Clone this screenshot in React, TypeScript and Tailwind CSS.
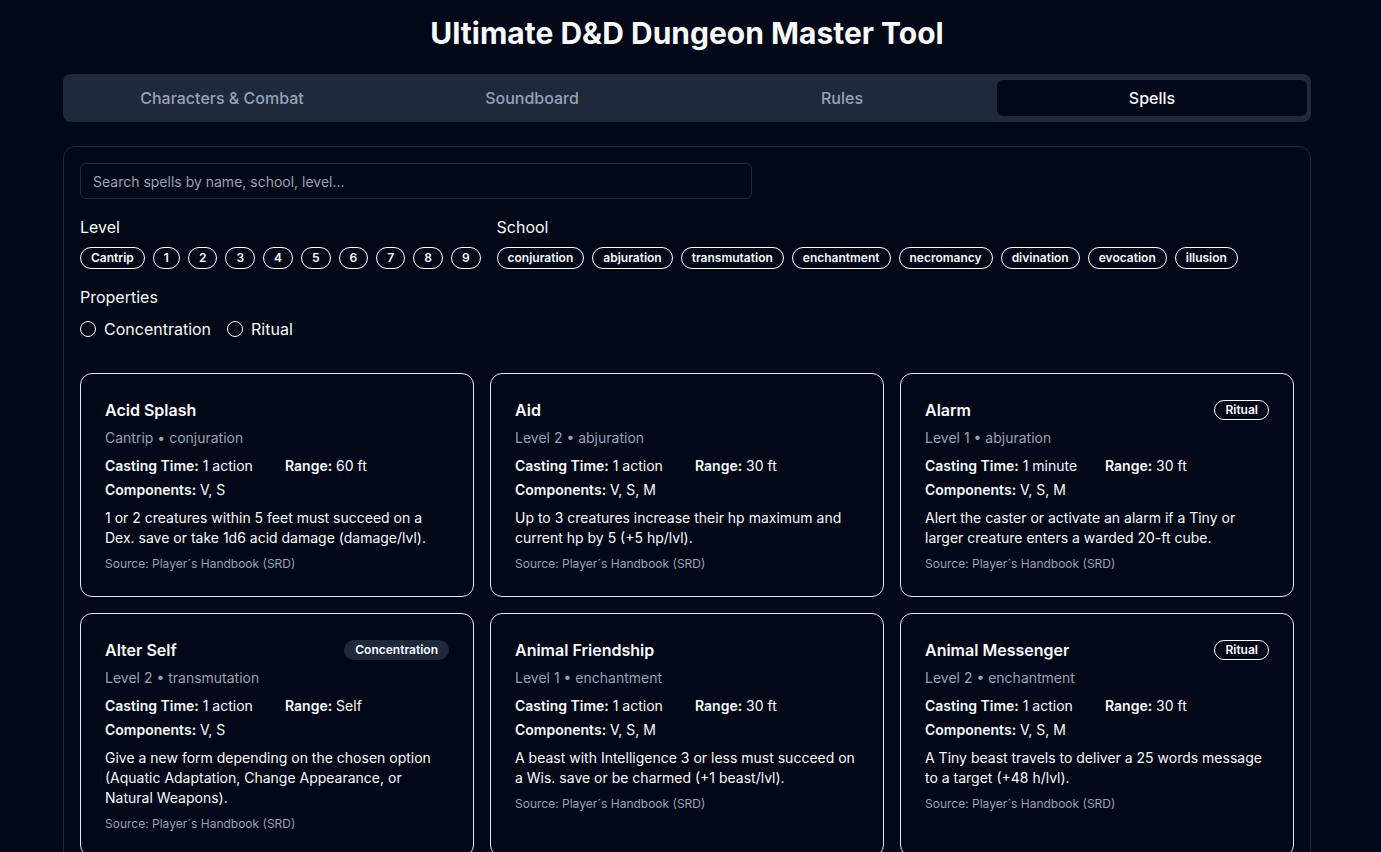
import { useState } from 'react';

interface Spell {
  name: string;
  level: string;
  school: string;
  castingTime: string;
  range: string;
  components: string;
  desc: string;
  ritual?: boolean;
  concentration?: boolean;
}

const spells: Spell[] = [
  { name: 'Acid Splash', level: 'Cantrip', school: 'conjuration', castingTime: '1 action', range: '60 ft', components: 'V, S', desc: '1 or 2 creatures within 5 feet must succeed on a Dex. save or take 1d6 acid damage (damage/lvl).' },
  { name: 'Aid', level: 'Level 2', school: 'abjuration', castingTime: '1 action', range: '30 ft', components: 'V, S, M', desc: 'Up to 3 creatures increase their hp maximum and current hp by 5 (+5 hp/lvl).' },
  { name: 'Alarm', level: 'Level 1', school: 'abjuration', castingTime: '1 minute', range: '30 ft', components: 'V, S, M', desc: 'Alert the caster or activate an alarm if a Tiny or larger creature enters a warded 20-ft cube.', ritual: true },
  { name: 'Alter Self', level: 'Level 2', school: 'transmutation', castingTime: '1 action', range: 'Self', components: 'V, S', desc: 'Give a new form depending on the chosen option (Aquatic Adaptation, Change Appearance, or Natural Weapons).', concentration: true },
  { name: 'Animal Friendship', level: 'Level 1', school: 'enchantment', castingTime: '1 action', range: '30 ft', components: 'V, S, M', desc: 'A beast with Intelligence 3 or less must succeed on a Wis. save or be charmed (+1 beast/lvl).' },
  { name: 'Animal Messenger', level: 'Level 2', school: 'enchantment', castingTime: '1 action', range: '30 ft', components: 'V, S, M', desc: 'A Tiny beast travels to deliver a 25 words message to a target (+48 h/lvl).', ritual: true },
];

const levels = ['Cantrip', '1', '2', '3', '4', '5', '6', '7', '8', '9'];
const schools = ['conjuration', 'abjuration', 'transmutation', 'enchantment', 'necromancy', 'divination', 'evocation', 'illusion'];
const tabs = ['Characters & Combat', 'Soundboard', 'Rules', 'Spells'];

const Pill = ({ label }: { label: string }) => (
  <button className="rounded-full border border-white px-2.5 py-0.5 text-xs font-semibold text-[#f8fafc] leading-4">
    {label}
  </button>
);

const SpellCard = ({ spell }: { spell: Spell }) => (
  <div className="rounded-xl border border-[#e2e8f0] p-6 text-[#f8fafc]">
    <div className="flex items-start justify-between">
      <h3 className="text-base font-semibold leading-6">{spell.name}</h3>
      {spell.ritual && (
        <span className="mt-0.5 rounded-full border border-white px-2.5 py-px text-xs font-semibold leading-4">Ritual</span>
      )}
      {spell.concentration && (
        <span className="mt-0.5 rounded-full border border-transparent bg-[#1e293b] px-2.5 py-px text-xs font-semibold leading-4">Concentration</span>
      )}
    </div>
    <p className="mt-[6px] text-sm leading-5 text-[#94a3b8]">
      {spell.level} • {spell.school}
    </p>
    <div className="mt-2 grid grid-cols-2 gap-x-4 gap-y-1 text-sm leading-5">
      <div><span className="font-semibold">Casting Time:</span> {spell.castingTime}</div>
      <div><span className="font-semibold">Range:</span> {spell.range}</div>
      <div className="col-span-2"><span className="font-semibold">Components:</span> {spell.components}</div>
    </div>
    <p className="mt-2 text-sm leading-5">{spell.desc}</p>
    <p className="mt-2 text-xs leading-4 text-[#94a3b8]">Source: Player´s Handbook (SRD)</p>
  </div>
);

export default function App() {
  const [tab, setTab] = useState('Spells');
  const [query, setQuery] = useState('');

  return (
    <div className="min-h-screen bg-[#020817] pr-[7px] text-[#f8fafc]" style={{ fontFamily: 'Inter, "Noto Sans", sans-serif' }}>
      <div className="container mx-auto px-4 pt-[15px] pb-8">
        <h1 className="text-center text-3xl font-bold leading-9">Ultimate D&amp;D Dungeon Master Tool</h1>

        <div className="mt-[23px] grid grid-cols-4 rounded-lg bg-[#1e293b] px-1 py-1.5">
          {tabs.map((t) => (
            <button
              key={t}
              onClick={() => setTab(t)}
              className={
                t === tab
                  ? 'h-9 rounded-md bg-[#020817] text-base font-medium text-[#f8fafc]'
                  : 'h-9 rounded-md text-base font-medium text-[#94a3b8]'
              }
            >
              {t}
            </button>
          ))}
        </div>

        <div className="mt-6 rounded-xl border border-[#1e293b] p-4">
          <input
            type="text"
            value={query}
            onChange={(e) => setQuery(e.target.value)}
            placeholder="Search spells by name, school, level..."
            className="h-9 w-full max-w-2xl rounded-md border border-[#1e293b] bg-transparent px-3 text-sm text-[#f8fafc] placeholder:text-[#94a3b8] outline-none"
          />

          <div className="mt-4 flex gap-4">
            <div>
              <h4 className="text-base leading-6">Level</h4>
              <div className="mt-2 flex gap-2">
                {levels.map((l) => <Pill key={l} label={l} />)}
              </div>
            </div>
            <div>
              <h4 className="text-base leading-6">School</h4>
              <div className="mt-2 flex gap-2">
                {schools.map((s) => <Pill key={s} label={s} />)}
              </div>
            </div>
          </div>

          <h4 className="mt-4 text-base leading-6">Properties</h4>
          <div className="mt-2 flex gap-4">
            {['Concentration', 'Ritual'].map((p) => (
              <label key={p} className="flex items-center gap-2 text-base leading-6">
                <span className="h-4 w-4 rounded-full border border-white" />
                {p}
              </label>
            ))}
          </div>

          <div className="mt-8 grid grid-cols-3 gap-4">
            {spells.map((s) => <SpellCard key={s.name} spell={s} />)}
          </div>
        </div>
      </div>
    </div>
  );
}
